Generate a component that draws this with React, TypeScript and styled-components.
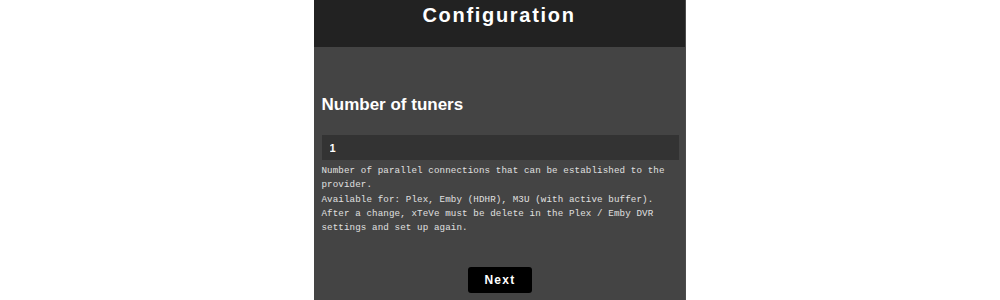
import React, { useState } from 'react';
import styled, { createGlobalStyle } from 'styled-components';

const GlobalStyle = createGlobalStyle`
  html, body {
    margin: 0;
    padding: 0;
    background: #ffffff;
    overflow: hidden;
  }
`;

const App = () => {
  const [tuners, setTuners] = useState('1');

  return (
    <>
      <GlobalStyle />
      <Page>
        <Panel>
          <Header>
            <Title>Configuration</Title>
          </Header>
          <Content>
            <Heading>Number of tuners</Heading>
            <Input value={tuners} onChange={e => setTuners(e.target.value)} />
            <Description>
              Number of parallel connections that can be established to the provider.
              <br />
              Available for: Plex, Emby (HDHR), M3U (with active buffer).
              <br />
              After a change, xTeVe must be delete in the Plex / Emby DVR settings and set up again.
            </Description>
            <Footer>
              <Button>Next</Button>
            </Footer>
          </Content>
        </Panel>
      </Page>
    </>
  );
};

const Page = styled.div`
  width: 1000px;
  height: 300px;
  display: flex;
  justify-content: center;
  overflow: hidden;
`;

const Panel = styled.div`
  width: 371px;
  height: 300px;
  margin-left: -1px;
  background: #444444;
  border-right: 1px solid #4c4c4c;
  display: flex;
  flex-direction: column;
`;

const Header = styled.header`
  height: 47px;
  background: #222222;
  display: flex;
  justify-content: center;
  padding-top: 3px;
  box-sizing: border-box;
`;

const Title = styled.h1`
  margin: 0;
  font-family: 'Liberation Sans', Arial, sans-serif;
  font-size: 20px;
  line-height: 24px;
  font-weight: bold;
  letter-spacing: 1.7px;
  color: #ffffff;
`;

const Content = styled.main`
  padding: 48px 6px 0 8px;
  display: flex;
  flex-direction: column;
`;

const Heading = styled.h2`
  margin: 0;
  font-family: 'Liberation Sans', Arial, sans-serif;
  font-size: 17px;
  line-height: 20px;
  font-weight: bold;
  color: #ffffff;
`;

const Input = styled.input`
  margin-top: 20px;
  height: 25px;
  box-sizing: border-box;
  border: none;
  outline: none;
  background: #333333;
  color: #ffffff;
  font-family: 'Liberation Sans', Arial, sans-serif;
  font-size: 11px;
  font-weight: bold;
  padding: 0 8px;
`;

const Description = styled.p`
  margin: 4px 0 0;
  font-family: 'Liberation Mono', 'DejaVu Sans Mono', monospace;
  font-size: 9.2px;
  line-height: 14.3px;
  letter-spacing: 0.11px;
  color: #e0e0e0;
  padding-right: 4px;
`;

const Footer = styled.div`
  display: flex;
  justify-content: center;
  margin-top: 32px;
`;

const Button = styled.button`
  width: 64px;
  height: 26px;
  border: none;
  border-radius: 3px;
  background: #000000;
  color: #ffffff;
  font-family: 'Liberation Sans', Arial, sans-serif;
  font-size: 12px;
  font-weight: bold;
  letter-spacing: 1.3px;
  cursor: pointer;
`;

export default App;
